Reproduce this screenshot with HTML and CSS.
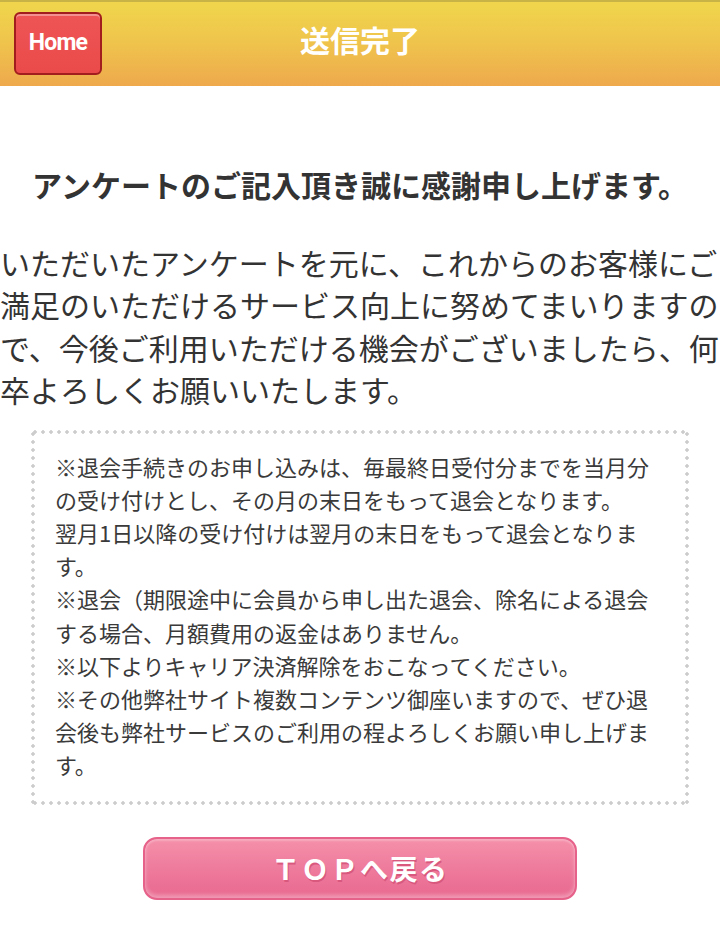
FILE: index.html
```html
<!DOCTYPE html>
<html lang="ja">
<head>
<meta charset="utf-8">
<title>送信完了</title>
<link rel="stylesheet" href="styles.css">
</head>
<body>
<header class="header">
  <a class="home-btn" href="#">Home</a>
  <h1 class="header-title">送信完了</h1>
</header>
<main class="main">
  <h2 class="thanks">アンケートのご記入頂き誠に感謝申し上げます。</h2>
  <p class="message">いただいたアンケートを元に、これからのお客様にご満足のいただけるサービス向上に努めてまいりますので、今後ご利用いただける機会がございましたら、何卒よろしくお願いいたします。</p>
  <div class="notice">
    <p>※退会手続きのお申し込みは、毎最終日受付分までを当月分の受け付けとし、その月の末日をもって退会となります。<br>翌月1日以降の受け付けは翌月の末日をもって退会となります。<br>※退会（期限途中に会員から申し出た退会、除名による退会する場合、月額費用の返金はありません。<br>※以下よりキャリア決済解除をおこなってください。<br>※その他弊社サイト複数コンテンツ御座いますので、ぜひ退会後も弊社サービスのご利用の程よろしくお願い申し上げます。</p>
  </div>
  <div class="btn-wrap">
    <a class="top-btn" href="#">ＴＯＰへ戻る</a>
  </div>
</main>
</body>
</html>
```

FILE: styles.css
```css
* { box-sizing: border-box; }
html, body {
  margin: 0;
  padding: 0;
  background: #fff;
}
body {
  font-family: "Noto Sans CJK JP", "Noto Sans", sans-serif;
  color: #333;
}
.header {
  position: relative;
  height: 86px;
  border-top: 2px solid #c8b446;
  background: linear-gradient(to bottom, #f0d64c 0%, #efc34c 50%, #eea94d 100%);
  display: flex;
  align-items: center;
  justify-content: center;
}
.header-title {
  margin: 0;
  font-size: 30px;
  font-weight: 700;
  color: #fff;
  line-height: 1;
  margin-top: -10px;
}
.home-btn {
  position: absolute;
  left: 14px;
  top: 10px;
  width: 88px;
  height: 63px;
  border: 2px solid #a21e1e;
  border-radius: 6px;
  background: linear-gradient(to bottom, #ef5555 0%, #ea4a4a 100%);
  box-shadow: inset 0 2px 0 rgba(255,255,255,0.35);
  color: #fff;
  font-family: Roboto, "Liberation Sans", Arial, sans-serif;
  font-weight: 700;
  font-size: 23px;
  letter-spacing: -0.8px;
  padding-bottom: 3px;
  text-decoration: none;
  display: flex;
  align-items: center;
  justify-content: center;
}
.main {
  padding-top: 77px;
}
.thanks {
  margin: 0;
  text-align: center;
  font-size: 30px;
  font-weight: 700;
  line-height: 43px;
  color: #333;
}
.message {
  margin: 35px 0 0;
  font-size: 30px;
  line-height: 42.4px;
  color: #333;
}
.notice {
  margin: 19px 31px 0;
  padding: 20px 21px 23px 24px;
  background-image:
    radial-gradient(circle, #cccccc 1.5px, transparent 1.9px),
    radial-gradient(circle, #cccccc 1.5px, transparent 1.9px),
    radial-gradient(circle, #cccccc 1.5px, transparent 1.9px),
    radial-gradient(circle, #cccccc 1.5px, transparent 1.9px);
  background-size: 8px 4px, 8px 4px, 4px 8px, 4px 8px;
  background-repeat: repeat-x, repeat-x, repeat-y, repeat-y;
  background-position: left top, left bottom, left top, right top;
}
.notice p {
  margin: 0;
  font-size: 22px;
  line-height: 33.2px;
  color: #3a3a3a;
}
.btn-wrap {
  display: flex;
  justify-content: center;
  margin-top: 32px;
}
.top-btn {
  width: 434px;
  height: 63px;
  border: 2px solid #e6628a;
  border-radius: 14px;
  background: linear-gradient(to bottom, #f590aa 0%, #ee7b9c 50%, #e96890 100%);
  box-shadow: inset 0 -3px 4px rgba(255,255,255,0.35), inset 0 2px 2px rgba(255,255,255,0.25);
  color: #fff;
  font-size: 28px;
  font-weight: 700;
  letter-spacing: 1.5px;
  text-shadow: 1px 2px 0 #d9587e;
  text-decoration: none;
  display: flex;
  align-items: center;
  justify-content: center;
}
```
